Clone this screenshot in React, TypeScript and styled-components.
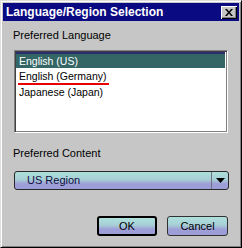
import React from 'react';
import styled, { createGlobalStyle } from 'styled-components';

const GlobalStyle = createGlobalStyle`
  html, body {
    margin: 0;
    padding: 0;
    background: #c6c6c6;
  }
  * { box-sizing: border-box; }
`;

const Window = styled.div`
  width: 242px;
  height: 248px;
  background: #c6c6c6;
  border-top: 1px solid #dedede;
  border-left: 1px solid #dedede;
  border-right: 1px solid #000;
  border-bottom: 1px solid #000;
  box-shadow: inset 1px 1px 0 #fff, inset -1px -1px 0 #808080;
  padding: 2px 2px;
  display: flex;
  flex-direction: column;
  font-family: "Liberation Sans", Arial, sans-serif;
`;

const TitleBar = styled.div`
  height: 18px;
  background: #0a0a82;
  display: flex;
  align-items: center;
  justify-content: space-between;
  padding: 0 2px 0 3px;
`;

const Title = styled.span`
  color: #fff;
  font-weight: bold;
  font-size: 12px;
`;

const CloseButton = styled.div`
  width: 16px;
  height: 13px;
  background: #c6c6c6;
  box-shadow: inset 1px 1px 0 #fff, inset -1px -1px 0 #000, inset -2px -2px 0 #808080;
  display: flex;
  align-items: center;
  justify-content: center;
`;

const Body = styled.div`
  display: flex;
  flex-direction: column;
  padding: 8px 11px 0 10px;
`;

const Label = styled.div<{ top?: number; gap: number }>`
  font-size: 11px;
  line-height: 13px;
  color: #000;
  margin-top: ${(p) => p.top || 0}px;
  margin-bottom: ${(p) => p.gap}px;
`;

const ListBox = styled.div`
  margin-left: 1px;
  width: 214px;
  height: 83px;
  background: #fff;
  border-top: 1px solid #808080;
  border-left: 1px solid #808080;
  border-right: 1px solid #fff;
  border-bottom: 1px solid #fff;
  box-shadow: inset 1px 1px 0 #404040, inset -1px -1px 0 #808080;
  padding: 1px 2px 0 1px;
  display: flex;
  flex-direction: column;
`;

const Row = styled.div<{ selected?: boolean }>`
  height: 16px;
  font-size: 10.5px;
  padding-left: 3px;
  color: ${(p) => (p.selected ? '#fff' : '#000')};
  background: ${(p) => (p.selected ? '#346666' : 'transparent')};
  border-top: ${(p) => (p.selected ? '2px solid #2c2c70' : '0')};
  line-height: ${(p) => (p.selected ? '14px' : '16px')};
`;

const Marked = styled.span`
  display: inline-block;
  border-bottom: 2px solid #e80000;
  line-height: 14px;
  padding-right: 2px;
  margin-left: -1px;
  padding-left: 1px;
`;

const gradient = 'linear-gradient(#aee0dc 0%, #a6cfd6 45%, #9e9ed8 70%, #9c9cd6 100%)';

const Select = styled.div`
  margin-left: 1px;
  width: 215px;
  height: 19px;
  border: 1px solid #282828;
  border-radius: 3px;
  background: ${gradient};
  display: flex;
  align-items: stretch;
  margin-bottom: 26px;
`;

const SelectText = styled.div`
  flex: 1;
  font-size: 11px;
  line-height: 17px;
  padding-left: 12px;
  color: #0e0e40;
`;

const Arrow = styled.div`
  width: 17px;
  border-left: 1px solid #707080;
  display: flex;
  align-items: center;
  justify-content: center;
`;

const Buttons = styled.div`
  display: flex;
  justify-content: flex-end;
  gap: 10px;
`;

const Button = styled.div<{ primary?: boolean }>`
  width: ${(p) => (p.primary ? 60 : 61)}px;
  height: 20px;
  border: ${(p) => (p.primary ? '2px solid #000' : '1px solid #303030')};
  border-radius: 3px;
  background: ${gradient};
  font-size: 11px;
  display: flex;
  align-items: center;
  justify-content: center;
  color: #000;
`;

export default function App() {
  return (
    <>
      <GlobalStyle />
      <Window>
        <TitleBar>
          <Title>Language/Region Selection</Title>
          <CloseButton>
            <svg width="8" height="7" viewBox="0 0 8 7">
              <path d="M0 0h2l2 2.5L6 0h2L5 3.5 8 7H6L4 4.5 2 7H0l3-3.5z" fill="#000" />
            </svg>
          </CloseButton>
        </TitleBar>
        <Body>
          <Label gap={8}>Preferred Language</Label>
          <ListBox>
            <Row selected>English (US)</Row>
            <Row>
              <Marked>English (Germany)</Marked>
            </Row>
            <Row>Japanese (Japan)</Row>
          </ListBox>
          <Label top={14} gap={11}>Preferred Content</Label>
          <Select>
            <SelectText>US Region</SelectText>
            <Arrow>
              <svg width="9" height="5" viewBox="0 0 9 5">
                <path d="M0 0h9L4.5 5z" fill="#000" />
              </svg>
            </Arrow>
          </Select>
          <Buttons>
            <Button primary>OK</Button>
            <Button>Cancel</Button>
          </Buttons>
        </Body>
      </Window>
    </>
  );
}
